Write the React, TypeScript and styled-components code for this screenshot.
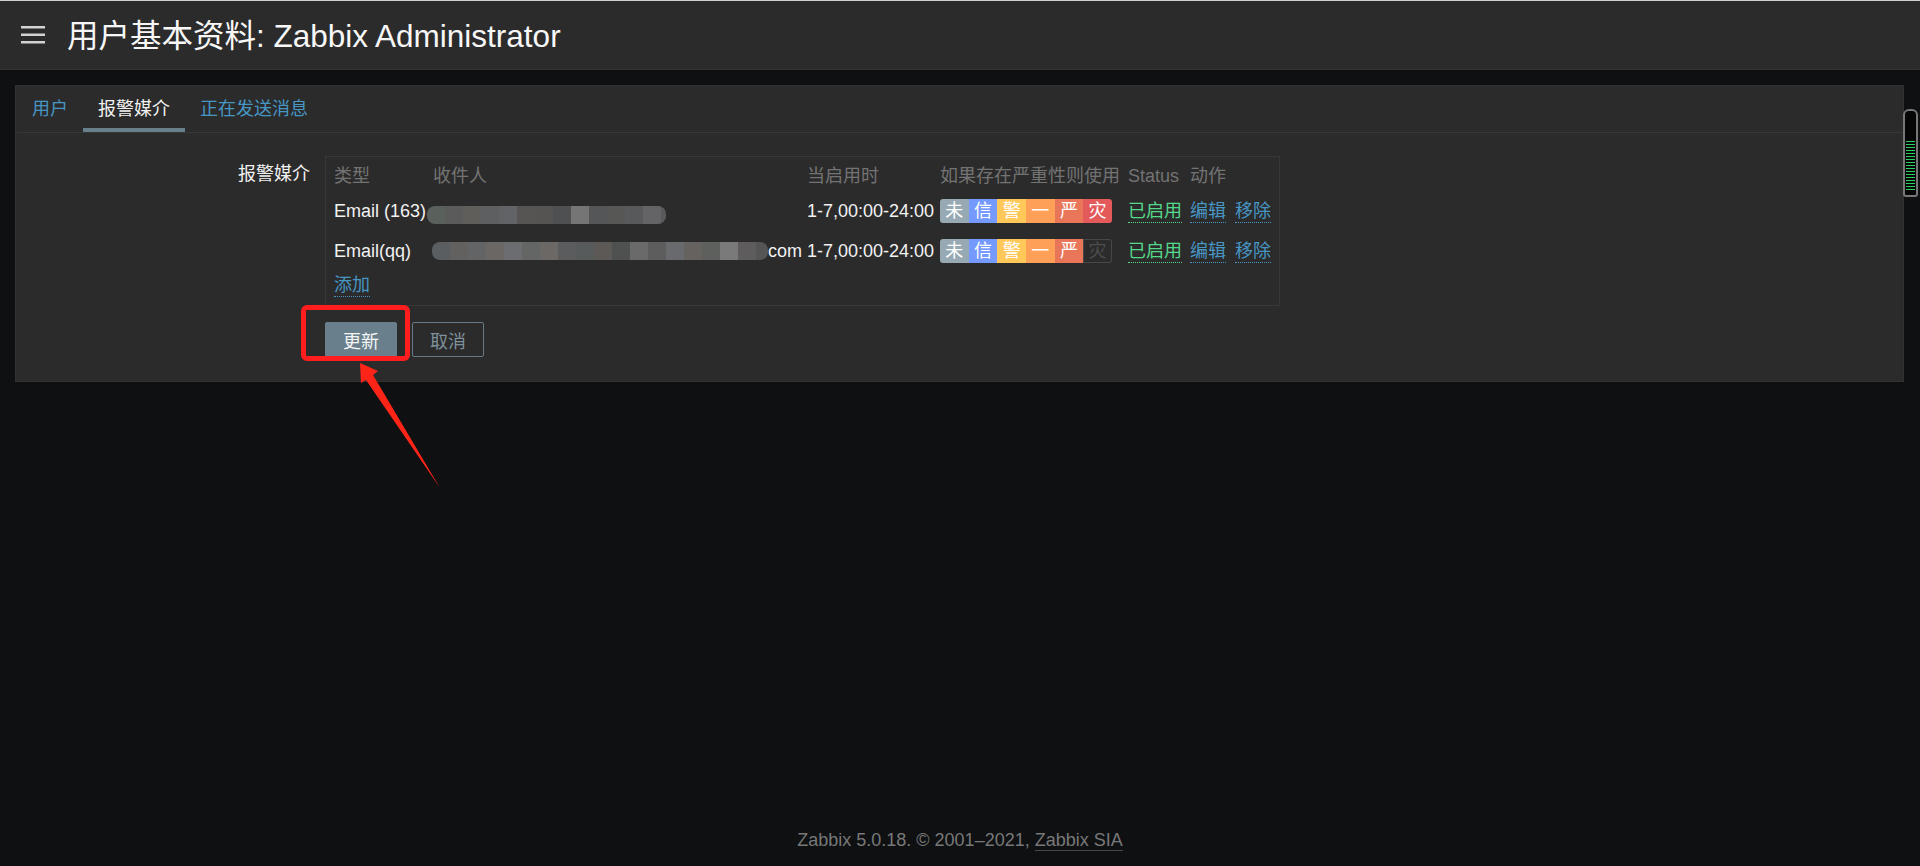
import React from 'react';
import styled, { createGlobalStyle } from 'styled-components';

const GlobalStyle = createGlobalStyle`
  html, body { margin: 0; padding: 0; background: #0e1012; }
  body {
    font-family: "Liberation Sans", Arial, "Noto Sans CJK SC", sans-serif;
    font-size: 18px; color: #f2f2f2;
  }
  * { box-sizing: border-box; }
`;

const Page = styled.div`
  position: relative; min-height: 100vh; display: flex; flex-direction: column; overflow: hidden;
`;

const Header = styled.header`
  height: 70px; background: #2b2b2b; border-top: 1px solid #cfcfcf; border-bottom: 1px solid #323232;
  display: flex; align-items: center; gap: 22px; padding-left: 21px;
`;

const Burger = styled.svg`
  display: block; flex: none;
`;

const Title = styled.h1`
  margin: 0; padding-top: 2px; font-size: 31.5px; line-height: 40px; font-weight: normal; color: #f7f7f7;
  white-space: nowrap;
`;

const Main = styled.main`
  flex: none; padding: 15px 16px 0 15px;
`;

const Panel = styled.section`
  background: #2b2b2b; border: 1px solid #313131;
`;

const TabBar = styled.nav`
  display: flex; margin: 0 1px; border-bottom: 1px solid #383838;
`;

const Tab = styled.a<{ $active?: boolean }>`
  padding: 11px 15px 7px; line-height: 24px; font-size: 18px; cursor: pointer; white-space: nowrap;
  color: ${(p) => (p.$active ? '#f2f2f2' : '#4796c4')};
  border-bottom: 4px solid ${(p) => (p.$active ? '#687f8c' : 'transparent')};
`;

const Form = styled.div`
  display: grid; grid-template-columns: 294px auto; column-gap: 15px; row-gap: 16px;
  padding: 23px 0 24px;
`;

const Label = styled.div`
  text-align: right; padding-top: 6px; line-height: 24px; white-space: nowrap;
`;

const MediaTable = styled.div`
  width: 955px; border: 1px solid #383838; padding: 7px 8px 9px;
  display: flex; flex-direction: column; gap: 6px;
`;

const Row = styled.div<{ $h: number }>`
  display: grid; grid-template-columns: 99px 374px 133px 188px 62px auto;
  align-items: center; height: ${(p) => p.$h}px; line-height: 24px; white-space: nowrap;
`;

const HeadCell = styled.div`
  color: #737373;
`;

const Cell = styled.div`
  display: flex; align-items: center; color: #f2f2f2;
`;

const Mosaic = styled.div<{ $w: number; $ml: number; $mt: number }>`
  display: flex; flex: none; height: 18px; width: ${(p) => p.$w}px; overflow: hidden;
  border-radius: 8px; margin-left: ${(p) => p.$ml}px; margin-top: ${(p) => p.$mt}px;
`;

const Pixel = styled.span<{ $c: string }>`
  flex: none; width: 18px; height: 18px; background: ${(p) => p.$c};
`;

const Severity = styled.div`
  display: flex; height: 24px;
`;

const Sev = styled.span<{ $bg?: string }>`
  width: 28.67px; height: 24px; line-height: 24px; text-align: center; font-size: 18px;
  color: ${(p) => (p.$bg ? '#ffffff' : '#4d4d4d')};
  background: ${(p) => p.$bg || 'transparent'};
  box-shadow: ${(p) => (p.$bg ? 'none' : 'inset 0 0 0 1px #474747')};
  &:first-child { border-radius: 3px 0 0 3px; }
  &:last-child { border-radius: 0 3px 3px 0; }
`;

const Link = styled.a<{ $green?: boolean }>`
  display: inline-block; line-height: 22px; cursor: pointer;
  color: ${(p) => (p.$green ? '#55d889' : '#4796c4')};
  border-bottom: 1px dotted ${(p) => (p.$green ? '#55d889' : '#4796c4')};
`;

const Actions = styled.div`
  display: flex; gap: 9px;
`;

const AddRow = styled.div`
  height: 22px; display: flex; align-items: flex-start;
`;

const Buttons = styled.div`
  grid-column: 2; position: relative; display: flex; gap: 15px;
`;

const Button = styled.button<{ $alt?: boolean }>`
  width: 72px; height: 35px; border-radius: 2px; font-size: 18px; cursor: pointer;
  font-family: inherit; padding: 0;
  background: ${(p) => (p.$alt ? 'transparent' : '#69808c')};
  color: ${(p) => (p.$alt ? '#7d909b' : '#f4f4f4')};
  border: 1px solid ${(p) => (p.$alt ? '#687a85' : '#69808c')};
`;

const Highlight = styled.div`
  position: absolute; left: -24px; top: -17px; width: 109px; height: 56px;
  border: 5px solid #ff1d1d; border-radius: 6px; pointer-events: none;
`;

const Arrow = styled.svg`
  position: absolute; left: 30px; top: 38px; overflow: visible; pointer-events: none;
`;

const Meter = styled.div`
  position: absolute; top: 109px; right: 2px; width: 15px; height: 88px;
  background: #060606; border: 2px solid #777; border-radius: 6px 6px 3px 3px;
  &::after {
    content: ''; position: absolute; left: 1px; right: 1px; bottom: 3px; height: 51px;
    background: repeating-linear-gradient(to bottom, #2bd160 0 1px, transparent 1px 3px);
  }
`;

const Footer = styled.footer`
  margin-top: auto; padding-bottom: 15px; text-align: center; line-height: 22px; color: #787878;
`;

const FooterLink = styled.a`
  color: #787878; border-bottom: 1px solid #434b52;
`;

const row1Pixels = ['#5a605c', '#5b5b5b', '#5f5e5a', '#5e5f60', '#626367', '#575553', '#555452', '#4e5052', '#757575', '#545658', '#575756', '#58595a', '#646466', '#5a5a5a'];
const row2Pixels = ['#5b5e60', '#636060', '#626466', '#6b6765', '#6b6d70', '#646666', '#6b6866', '#5a5c5e', '#575b5b', '#5c5957', '#4f5050', '#6a6a6a', '#5d5d5d', '#686a6d', '#65625f', '#5e605e', '#7a7a7a', '#5e5c5d', '#555555'];

const sevLabels = ['未', '信', '警', '一', '严', '灾'];
const sevColors = ['#97aab3', '#7499ff', '#ffc859', '#ffa059', '#e97659', '#e45959'];

const media = [
  { type: 'Email (163)', pixels: row1Pixels, w: 239, ml: -6, mt: 8, tail: '', sev: [1, 1, 1, 1, 1, 1] },
  { type: 'Email(qq)', pixels: row2Pixels, w: 336, ml: -1, mt: 0, tail: 'com', sev: [1, 1, 1, 1, 1, 0] },
];

export default function App() {
  return (
    <Page>
      <GlobalStyle />
      <Header>
        <Burger width="24" height="18" viewBox="0 0 24 18">
          <rect x="0" y="0" width="24" height="2.5" fill="#d2d2d2" />
          <rect x="0" y="7.5" width="24" height="2.5" fill="#d2d2d2" />
          <rect x="0" y="15" width="24" height="2.5" fill="#d2d2d2" />
        </Burger>
        <Title>用户基本资料: Zabbix Administrator</Title>
      </Header>

      <Main>
        <Panel>
          <TabBar>
            <Tab>用户</Tab>
            <Tab $active>报警媒介</Tab>
            <Tab>正在发送消息</Tab>
          </TabBar>

          <Form>
            <Label>报警媒介</Label>
            <MediaTable>
              <Row $h={24}>
                <HeadCell>类型</HeadCell>
                <HeadCell>收件人</HeadCell>
                <HeadCell>当启用时</HeadCell>
                <HeadCell>如果存在严重性则使用</HeadCell>
                <HeadCell>Status</HeadCell>
                <HeadCell>动作</HeadCell>
              </Row>
              {media.map((m) => (
                <Row $h={34} key={m.type}>
                  <Cell>{m.type}</Cell>
                  <Cell>
                    <Mosaic $w={m.w} $ml={m.ml} $mt={m.mt}>
                      {m.pixels.map((c, i) => (
                        <Pixel key={i} $c={c} />
                      ))}
                    </Mosaic>
                    {m.tail}
                  </Cell>
                  <Cell>1-7,00:00-24:00</Cell>
                  <Cell>
                    <Severity>
                      {sevLabels.map((s, i) => (
                        <Sev key={s} $bg={m.sev[i] ? sevColors[i] : undefined}>{s}</Sev>
                      ))}
                    </Severity>
                  </Cell>
                  <Cell>
                    <Link $green>已启用</Link>
                  </Cell>
                  <Cell>
                    <Actions>
                      <Link>编辑</Link>
                      <Link>移除</Link>
                    </Actions>
                  </Cell>
                </Row>
              ))}
              <AddRow>
                <Link>添加</Link>
              </AddRow>
            </MediaTable>

            <Buttons>
              <Button>更新</Button>
              <Button $alt>取消</Button>
              <Highlight />
              <Arrow width="95" height="135" viewBox="0 0 95 135">
                <polygon points="5,3 23,11 18,15 85,128 11,20 6,23" fill="#ff2418" />
              </Arrow>
            </Buttons>
          </Form>
        </Panel>
      </Main>

      <Footer>
        Zabbix 5.0.18. © 2001–2021, <FooterLink>Zabbix SIA</FooterLink>
      </Footer>

      <Meter />
    </Page>
  );
}
